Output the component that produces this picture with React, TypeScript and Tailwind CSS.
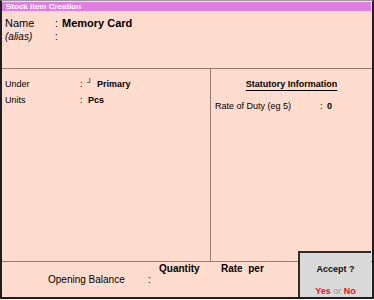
export default function App() {
  return (
    <div className="w-[374px] h-[300px] bg-white" style={{ fontFamily: '"Liberation Sans", Arial, sans-serif' }}>
      <div className="relative w-[374px] h-[299px] border-t border-t-[#9a9a9a] border-x-2 border-b-2 border-[#1e1e1e] bg-[#ffdccd] flex flex-col">
        <div className="h-[9px] mt-[1px] mr-[1px] bg-[#e07fe0] text-white text-[8px] font-bold leading-[9px] pl-[4px]">
          Stock Item Creation
        </div>

        <div className="h-[57px] pl-[3px] pt-[4px] text-black">
          <div className="flex items-baseline h-[14px]">
            <span className="w-[50px] text-[11px]">Name</span>
            <span className="w-[7px] text-[11px]">:</span>
            <span className="text-[11px] font-bold">Memory Card</span>
          </div>
          <div className="flex items-baseline h-[12px]">
            <span className="w-[50px] text-[10px] italic">(alias)</span>
            <span className="text-[10px]">:</span>
          </div>
        </div>

        <div className="h-px bg-[#9b7b6b]" />

        <div className="flex h-[192px]">
          <div className="w-[208px] pl-[3px] pt-[9px] text-[9px] text-black">
            <div className="flex items-baseline h-[16px]">
              <span className="w-[75px]">Under</span>
              <span className="w-[7px]">:</span>
              <span className="w-[10px] text-[8px] relative -top-[2px]">┘</span>
              <span className="font-bold">Primary</span>
            </div>
            <div className="flex items-baseline h-[16px]">
              <span className="w-[75px]">Units</span>
              <span className="w-[8px]">:</span>
              <span className="font-bold">Pcs</span>
            </div>
          </div>
          <div className="w-px bg-[#9b7b6b]" />
          <div className="flex-1 pt-[9px] text-[9px] text-black">
            <div className="flex justify-center h-[22px]">
              <span className="font-bold underline underline-offset-[3px]">Statutory Information</span>
            </div>
            <div className="flex items-baseline pl-[4px]">
              <span className="w-[105px] text-[9px]">Rate of Duty (eg 5)</span>
              <span className="w-[7px]">:</span>
              <span className="font-bold">0</span>
            </div>
          </div>
        </div>

        <div className="h-px bg-[#9b7b6b]" />

        <div className="flex-1 relative text-[9px] leading-[11px] text-black">
          <div className="flex pl-[157px] pt-[1px] text-[10px] font-bold">
            <span className="w-[62px]">Quantity</span>
            <span>Rate&nbsp; per</span>
          </div>
          <div className="flex pl-[46px] text-[10px]">
            <span className="w-[100px]">Opening Balance</span>
            <span>:</span>
          </div>
        </div>

        <div className="absolute right-[1px] bottom-0 w-[73px] h-[46px] bg-[#dadada] border-t-2 border-l-2 border-[#2e2e2e] flex flex-col items-center text-[9px] leading-[11px] font-bold">
          <div className="mt-[11px] text-[#111]">Accept ?</div>
          <div className="mt-[11px]">
            <span className="text-[#ee1010]">Yes</span>
            <span className="text-[#999] font-normal"> or </span>
            <span className="text-[#ee1010]">No</span>
          </div>
        </div>
      </div>
    </div>
  )
}
